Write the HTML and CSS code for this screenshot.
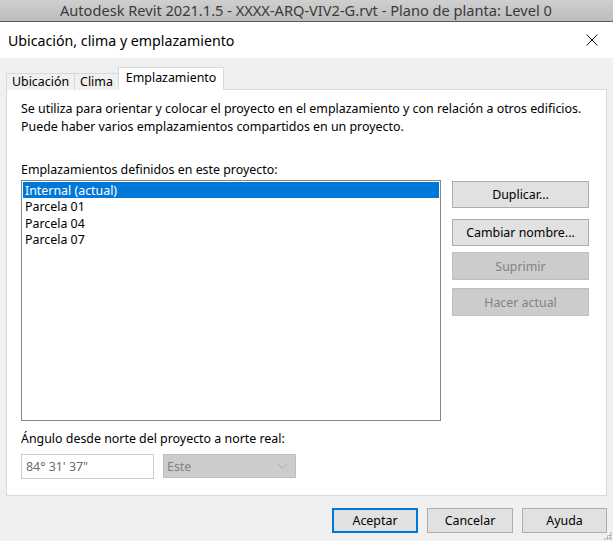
FILE: index.html
```html
<!DOCTYPE html>
<html lang="es">
  <head>
    <meta charset="UTF-8" />
    <title>Ubicación, clima y emplazamiento</title>
    <link rel="stylesheet" href="styles.css">
  </head>
  <body>
    <div class="app-bar">Autodesk Revit 2021.1.5 - XXXX-ARQ-VIV2-G.rvt - Plano de planta: Level 0</div>

    <div class="dialog">
      <div class="dialog-title">
        <span>Ubicación, clima y emplazamiento</span>
        <svg class="close" width="12" height="12" viewBox="0 0 12 12">
          <path d="M0.5 0.5 L11.5 11.5 M11.5 0.5 L0.5 11.5" stroke="#111" stroke-width="1" fill="none" />
        </svg>
      </div>

      <div class="dialog-body">
        <div class="tabs">
          <div class="tab">Ubicación</div>
          <div class="tab">Clima</div>
          <div class="tab active">Emplazamiento</div>
        </div>

        <div class="tab-panel">
          <p class="intro">
            Se utiliza para orientar y colocar el proyecto en el emplazamiento y con relación a otros edificios.<br>
            Puede haber varios emplazamientos compartidos en un proyecto.
          </p>

          <div class="field-label">Emplazamientos definidos en este proyecto:</div>
          <div class="sites">
            <ul class="site-list">
              <li class="selected">Internal (actual)</li>
              <li>Parcela 01</li>
              <li>Parcela 04</li>
              <li>Parcela 07</li>
            </ul>
            <div class="site-actions">
              <button class="btn btn-dup">Duplicar...</button>
              <button class="btn btn-rename">Cambiar nombre...</button>
              <button class="btn btn-delete" disabled>Suprimir</button>
              <button class="btn btn-current" disabled>Hacer actual</button>
            </div>
          </div>

          <div class="field-label angle-label">Ángulo desde norte del proyecto a norte real:</div>
          <div class="angle-row">
            <div class="angle-input">84° 31' 37"</div>
            <div class="angle-dir">
              <span>Este</span>
              <svg width="11" height="6" viewBox="0 0 11 6">
                <path d="M0.5 0.5 L5.5 5.5 L10.5 0.5" stroke="#adadad" stroke-width="1" fill="none" />
              </svg>
            </div>
          </div>
        </div>

        <div class="footer">
          <button class="btn btn-footer default">Aceptar</button>
          <button class="btn btn-footer">Cancelar</button>
          <button class="btn btn-footer">Ayuda</button>
        </div>
      </div>
      <div class="grip"></div>
    </div>
  </body>
</html>
```

FILE: styles.css
```css
* {
  margin: 0;
  padding: 0;
  box-sizing: border-box;
}

body {
  width: 613px;
  height: 541px;
  overflow: hidden;
  background: #f0f0f0;
  font-family: "Noto Sans", "Open Sans", sans-serif;
  font-size: 12.4px;
  color: #000;
}

.app-bar {
  height: 22px;
  background: linear-gradient(#cfcfcf, #bdbdbd);
  border-bottom: 1px solid #5a5a5a;
  color: #3a3a3a;
  font-size: 14.6px;
  line-height: 21px;
  padding-left: 60px;
  white-space: nowrap;
  overflow: hidden;
}

.dialog {
  position: relative;
  height: 519px;
}

.dialog-title {
  height: 36px;
  background: #fff;
  display: flex;
  align-items: center;
  justify-content: space-between;
  padding: 0 15px 0 8px;
  font-size: 14.2px;
}

.dialog-body {
  padding: 9px 6px 0 6px;
}

.tabs {
  display: flex;
  align-items: flex-end;
  height: 23px;
  margin-bottom: -1px;
}

.tab {
  height: 17px;
  line-height: 16px;
  padding: 0 5px;
  border: 1px solid #d9d9d9;
  border-bottom: none;
  border-right: none;
  background: #f0f0f0;
}

.tab.active {
  height: 23px;
  line-height: 20px;
  padding: 0 7px;
  background: #fff;
  border-right: 1px solid #d9d9d9;
  position: relative;
  z-index: 1;
}

.tab-panel {
  height: 407px;
  background: #fff;
  border: 1px solid #d9d9d9;
  padding: 10px 14px 0 14px;
}

.intro {
  line-height: 18px;
  white-space: nowrap;
}

.field-label {
  margin-top: 25px;
  line-height: 18px;
}

.sites {
  display: flex;
  gap: 11px;
  margin-top: 1px;
}

.site-list {
  list-style: none;
  width: 420px;
  height: 241px;
  border: 1px solid #828790;
  padding: 1px;
}

.site-list li {
  height: 16.3px;
  line-height: 17px;
  padding-left: 2px;
}

.site-list li.selected {
  background: #0078d7;
  color: #fff;
}

.site-actions {
  display: flex;
  flex-direction: column;
  padding-top: 1px;
}

.btn {
  font-family: inherit;
  font-size: 12.4px;
  color: #000;
  background: #e1e1e1;
  border: 1px solid #adadad;
}

.site-actions .btn {
  width: 137px;
  height: 27px;
}

.btn-rename {
  margin-top: 11px;
}

.site-actions .btn-delete {
  margin-top: 6px;
  height: 28px;
}

.site-actions .btn-current {
  margin-top: 8px;
  height: 28px;
}

.btn:disabled {
  background: #cccccc;
  border-color: #bfbfbf;
  color: #838383;
}

.angle-label {
  margin-top: 9px;
}

.angle-row {
  display: flex;
  gap: 9px;
  margin-top: 6px;
}

.angle-input {
  width: 133px;
  height: 25px;
  border: 1px solid #cccccc;
  color: #6d6d6d;
  line-height: 23px;
  padding-left: 4px;
}

.angle-dir {
  width: 133px;
  height: 24px;
  background: #cccccc;
  border: 1px solid #bfbfbf;
  color: #838383;
  display: flex;
  align-items: center;
  justify-content: space-between;
  padding: 0 7px 0 3px;
}

.footer {
  display: flex;
  justify-content: flex-end;
  gap: 9px;
  margin-top: 12px;
}

.btn-footer {
  width: 86px;
  height: 25px;
}

.btn-footer:last-child {
  width: 85px;
}

.btn-footer.default {
  border: 2px solid #0078d7;
}

.grip {
  position: absolute;
  right: 1px;
  bottom: 1px;
  width: 9px;
  height: 9px;
  background:
    radial-gradient(circle, #b8b8b8 1px, transparent 1.2px) 0 0 / 3px 3px;
  clip-path: polygon(100% 0, 100% 100%, 0 100%);
}
```
